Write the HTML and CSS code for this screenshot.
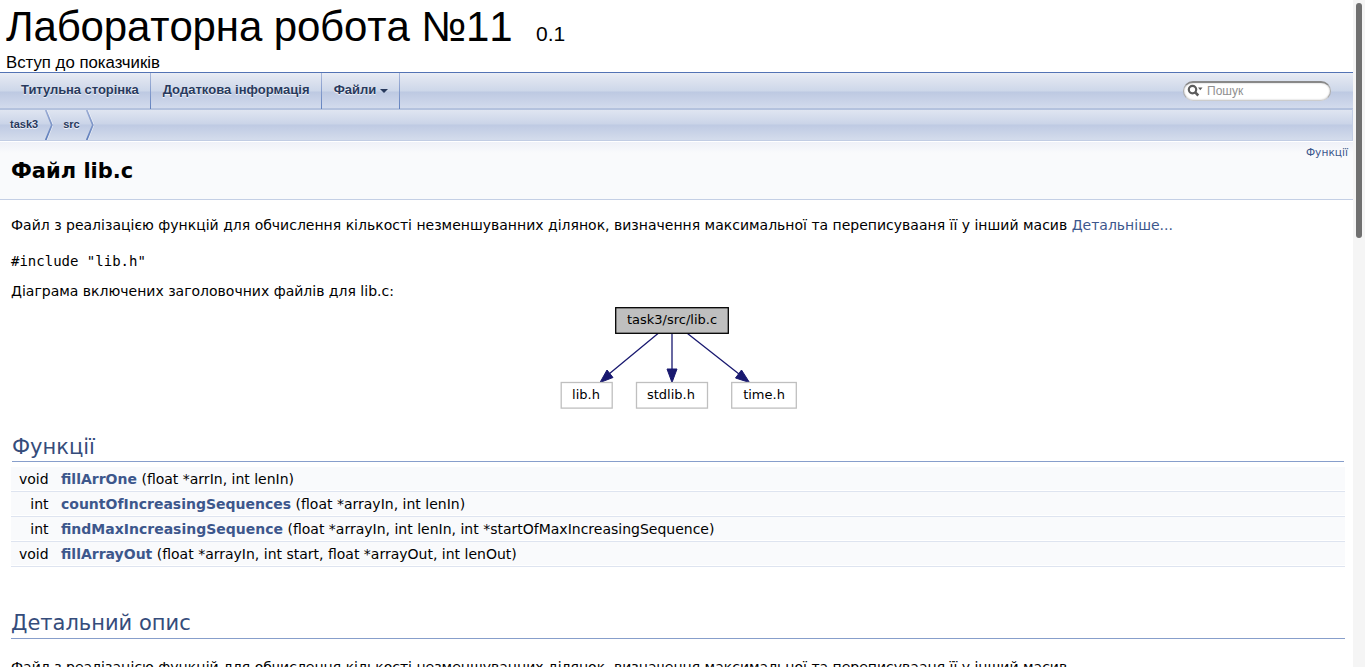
FILE: index.html
```html
<!DOCTYPE html>
<html lang="uk">
<head>
<meta charset="utf-8">
<title>Лабораторна робота №11: Файл lib.c</title>
<link rel="stylesheet" href="styles.css">
</head>
<body>
<div class="page">
<main class="document">
<header class="titlearea">
<div class="project-name">Лабораторна робота №11 <span class="project-number">0.1</span></div>
<div class="project-brief">Вступ до показчиків</div>
</header>
<nav class="menu">
<a class="menu-item">Титульна сторінка</a>
<a class="menu-item">Додаткова інформація</a>
<a class="menu-item">Файли<span class="caret"></span></a>
<div class="search">
<svg class="search-icon" width="20" height="19" viewBox="0 0 20 19"><circle cx="9.500" cy="8.600" r="3.700" fill="none" stroke="#5c5c5c" stroke-width="2.200"/><path d="M12 11.200 15.300 14.500" stroke="#5c5c5c" stroke-width="2.600"/><path d="M15 6.600h4.500l-2.200 2.600z" fill="#5c5c5c"/></svg>
<span class="search-text">Пошук</span>
</div>
</nav>
<div class="navpath">
<span class="crumb crumb-first">task3</span>
<svg class="sep" width="8" height="30" viewBox="0 0 8 30"><path d="M.7 0 6.800 15 .7 30" fill="none" stroke="#fff" stroke-opacity=".6" transform="translate(1.200 0)"/><path d="M.7 0 6.800 15 .7 30" fill="none" stroke="url(#sg)" stroke-width="1.700"/><defs><linearGradient id="sg" x2="0" y2="1"><stop stop-color="#9bacd4"/><stop offset="1" stop-color="#5c7cba"/></linearGradient></defs></svg>
<span class="crumb">src</span>
<svg class="sep" width="8" height="30" viewBox="0 0 8 30"><path d="M.7 0 6.800 15 .7 30" fill="none" stroke="#fff" stroke-opacity=".6" transform="translate(1.200 0)"/><path d="M.7 0 6.800 15 .7 30" fill="none" stroke="url(#sg)" stroke-width="1.700"/></svg>
</div>
<div class="header">
<h1 class="title">Файл lib.c</h1>
<a class="summary">Функції</a>
</div>
<div class="contents">
<p class="intro">Файл з реалізацією функцій для обчислення кількості незменшуванних ділянок, визначення максимальної та переписувааня її у інший масив <a class="link">Детальніше...</a></p>
<code class="include">#include "lib.h"</code>
<div class="dyn">Діаграма включених заголовочних файлів для lib.c:</div>
<svg class="graph" width="244" height="112" viewBox="0 0 244 112">
<g stroke="#191970" stroke-width="1.3" fill="none"><path d="M102 30.500 53 71M116 30.500V67M131.500 30.500 183 71"/></g>
<g fill="#191970" stroke="#191970"><path d="m44 79.500 7-12.500 6 7.500zM111 66h10l-5 13.500zM193.500 79.500l-14-4.500 6-8z"/></g>
<rect x="59.700" y="4.700" width="112.600" height="25.600" fill="#bfbfbf" stroke="#000" stroke-width="1.300"/>
<g fill="#fff" stroke="#bfbfbf" stroke-width="1.300"><rect x="5.200" y="79.500" width="51" height="25.600"/><rect x="80.500" y="79.500" width="71" height="25.600"/><rect x="175.700" y="79.500" width="64.600" height="25.600"/></g>
<g class="node-text"><text x="116" y="21">task3/src/lib.c</text><text x="30" y="96">lib.h</text><text x="115" y="96">stdlib.h</text><text x="208" y="96">time.h</text></g>
</svg>
<section class="functions">
<h2 class="heading heading-inset">Функції</h2>
<div class="row"><span class="type">void</span><span><a class="func">fillArrOne</a> (float *arrIn, int lenIn)</span></div>
<div class="row"><span class="type">int</span><span><a class="func">countOfIncreasingSequences</a> (float *arrayIn, int lenIn)</span></div>
<div class="row"><span class="type">int</span><span><a class="func">findMaxIncreasingSequence</a> (float *arrayIn, int lenIn, int *startOfMaxIncreasingSequence)</span></div>
<div class="row"><span class="type">void</span><span><a class="func">fillArrayOut</a> (float *arrayIn, int start, float *arrayOut, int lenOut)</span></div>
</section>
<h2 class="heading details">Детальний опис</h2>
<p class="detail-text">Файл з реалізацією функцій для обчислення кількості незменшуванних ділянок, визначення максимальної та переписувааня її у інший масив</p>
</div>
</main>
<div class="scrollbar"><div class="thumb"></div></div>
</div>
</body>
</html>
```

FILE: styles.css
```css
* { box-sizing: border-box; }
body { margin: 0; background: #fff; color: #000; font: 14px/22px "DejaVu Sans", sans-serif; }
.page { display: flex; height: 667px; overflow: hidden; }
.document { flex: 1; min-width: 0; overflow: hidden; }
.scrollbar { width: 12px; background: #f5f5f5; padding: 3px 3px 0; }
.thumb { height: 235px; border-radius: 3px; background: #707070; }

.titlearea { height: 73px; padding: 2px 6px 0; border-bottom: 1px solid #5373b4; font-family: "Liberation Sans", sans-serif; }
.project-name { height: 49px; font-size: 42px; line-height: 49px; font-kerning: none; letter-spacing: -.13px; white-space: pre; }
.project-number { font-size: 21px; line-height: 1; letter-spacing: 0; margin-left: 12px; }
.project-brief { font-size: 16.8px; line-height: 24px; }

.menu { display: flex; height: 36px; padding-left: 9px; font: bold 13px/34px "Liberation Sans", sans-serif; color: #283a5d; text-shadow: 0 1px 1px rgba(255,255,255,.9); background: linear-gradient(#eaedf5 0, #e1e6f1 4px, #cdd7e9 18px, #bdc9e2 19px, #cdd6ea 31px, #d3dbec 35px, #b4c2de 35px, #b4c2de 36px); }
.menu-item { padding: 0 11px 0 12px; border-right: 1px solid; border-image: linear-gradient(#aab9db, #5f7fbd) 1; white-space: nowrap; }
.menu-item:first-child { letter-spacing: -.06px; }
.menu-item:nth-child(2) { padding-right: 11px; letter-spacing: .04px; }
.caret { display: inline-block; margin-left: 4px; vertical-align: 1px; border: 4px solid transparent; border-top-color: #283a5d; border-bottom: 0; }
.search { display: flex; margin: 8px 22px 0 auto; width: 148px; height: 20px; border: 1px solid #aaa; border-top: 2px solid #888; border-bottom-color: #ccc; border-radius: 10px; background: #fff; box-shadow: inset 0 0 2px #bbb; }
.search-icon { margin: -2px 0 0 -1px; }
.search-text { margin-left: 4px; font: 12px/17px "Liberation Sans", sans-serif; color: #909090; text-shadow: none; }

.navpath { display: flex; height: 32px; padding-top: 1px; border: 1px solid #c2cde4; border-width: 0 1px 1px 0; background: linear-gradient(#b4c2de 0, #b4c2de 1px, #dfe5f1 1px, #cad4e8 15px, #becae3 16px, #d4dcec 31px); font: bold 11px/28px "Liberation Sans", sans-serif; color: #283a5d; text-shadow: 0 1px 1px rgba(255,255,255,.9); }
.crumb { padding: 0 6px 0 10px; }
.crumb-first { padding-right: 7px; }
.sep { display: block; }

.header { display: flex; justify-content: space-between; height: 59px; border-bottom: 1px solid #c4cfe5; background: linear-gradient(#fff 0, #fff 1px, #eff1f8 1px, #f9fafc 12px); }
.title { margin: 18px 0 0 11px; font-size: 21px; line-height: 24px; }
.summary { padding: 2px 5px 0 0; font-size: 10.67px; line-height: 20px; color: #3d578c; }
.contents { padding: 0 8px 0 11px; }
.intro { margin: 14px 0; white-space: nowrap; }
.link { color: #3d578c; }
.include { display: block; font: 14px/22px "DejaVu Sans Mono", monospace; }
.dyn { margin-top: 8px; }
.graph { display: block; margin: 1px auto 0; }
.node-text { font: 13px "DejaVu Sans", sans-serif; text-anchor: middle; }
.heading { margin: 0; height: 30px; border-bottom: 1px solid #879ecb; font-weight: 400; font-size: 21px; line-height: 28px; color: #354c7b; }
.functions { margin-top: 17px; }
.heading-inset { margin: 0 1px 5px; line-height: 30px; }
.row { display: flex; height: 25px; border-bottom: 1px solid #dee4f0; background: linear-gradient(#f9fafc 23px, #fff 23px); line-height: 24px; }
.type { width: 37.6px; margin-right: 12.4px; text-align: right; }
.func { color: #3d578c; font-weight: 700; }
.details { margin-top: 42px; }
.detail-text { margin: 17px 0 0; white-space: nowrap; }
```
